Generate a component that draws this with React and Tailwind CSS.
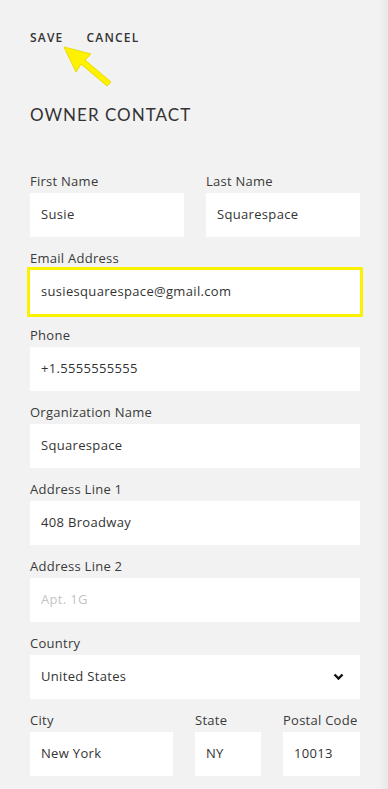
import React from "react";

const Field = ({ label, value, placeholder, highlight, select }) => (
  <div className="flex flex-col">
    <label className="text-[13px] leading-[18px] tracking-[0.02em] text-[#3a3a3a] mb-[3px] whitespace-nowrap">
      {label}
    </label>
    <div
      className={`h-[44px] bg-white flex items-center justify-between pl-[11px] pr-[14px] text-[13px] tracking-[0.025em] ${
        highlight ? "outline-[3px] outline-solid outline-[#fbf200] outline-offset-[0px]" : ""
      }`}
    >
      {value ? (
        <span className="text-[#333] whitespace-nowrap">{value}</span>
      ) : (
        <span className="text-[#c4c4c4]">{placeholder}</span>
      )}
      {select && (
        <svg width="11" height="8" viewBox="0 0 11 8" className="mr-[2px]">
          <path d="M1.5 1.5 L5.5 5.5 L9.5 1.5" fill="none" stroke="#111" strokeWidth="2.4" />
        </svg>
      )}
    </div>
  </div>
);

const App = () => {
  return (
    <div
      className="flex min-h-[789px] bg-[#f2f2f2]"
      style={{ fontFamily: "'Open Sans', 'Lato', sans-serif" }}
    >
      <div className="w-[380px] pl-[30px] pr-[20px] pt-[30px] pb-6 relative">
        {/* Top actions */}
        <div className="flex gap-[23px] text-[12px] leading-[16px] font-semibold tracking-[0.1em] text-[#333]">
          <button>SAVE</button>
          <button>CANCEL</button>
        </div>

        {/* Yellow arrow */}
        <svg
          className="absolute left-[60px] top-[44px]"
          width="56"
          height="46"
          viewBox="0 0 56 46"
        >
          <polygon
            points="4,3 31,10 25,16 51,38 47,42 21,20 16,28"
            fill="#fff200"
            stroke="#e8dc00"
            strokeWidth="1"
            strokeLinejoin="round"
          />
        </svg>

        <h2
          className="mt-[57px] leading-[24px] tracking-[0.06em] text-[#333]"
          style={{ fontFamily: "'Lato', sans-serif", fontSize: "17px" }}
        >
          OWNER CONTACT
        </h2>

        <div className="mt-[45px] flex flex-col gap-[12px]">
          <div className="grid grid-cols-2 gap-[22px]">
            <Field label="First Name" value="Susie" />
            <Field label="Last Name" value="Squarespace" />
          </div>
          <Field label="Email Address" value="susiesquarespace@gmail.com" highlight />
          <Field label="Phone" value="+1.5555555555" />
          <Field label="Organization Name" value="Squarespace" />
          <Field label="Address Line 1" value="408 Broadway" />
          <Field label="Address Line 2" placeholder="Apt. 1G" />
          <Field label="Country" value="United States" select />
          <div className="grid grid-cols-[143px_66px_1fr] gap-[22px]">
            <Field label="City" value="New York" />
            <Field label="State" value="NY" />
            <Field label="Postal Code" value="10013" />
          </div>
        </div>
      </div>
      <div className="w-[8px] bg-gradient-to-r from-[#f0f0f0] to-[#e8e8e8]" />
    </div>
  );
};

export default App;
